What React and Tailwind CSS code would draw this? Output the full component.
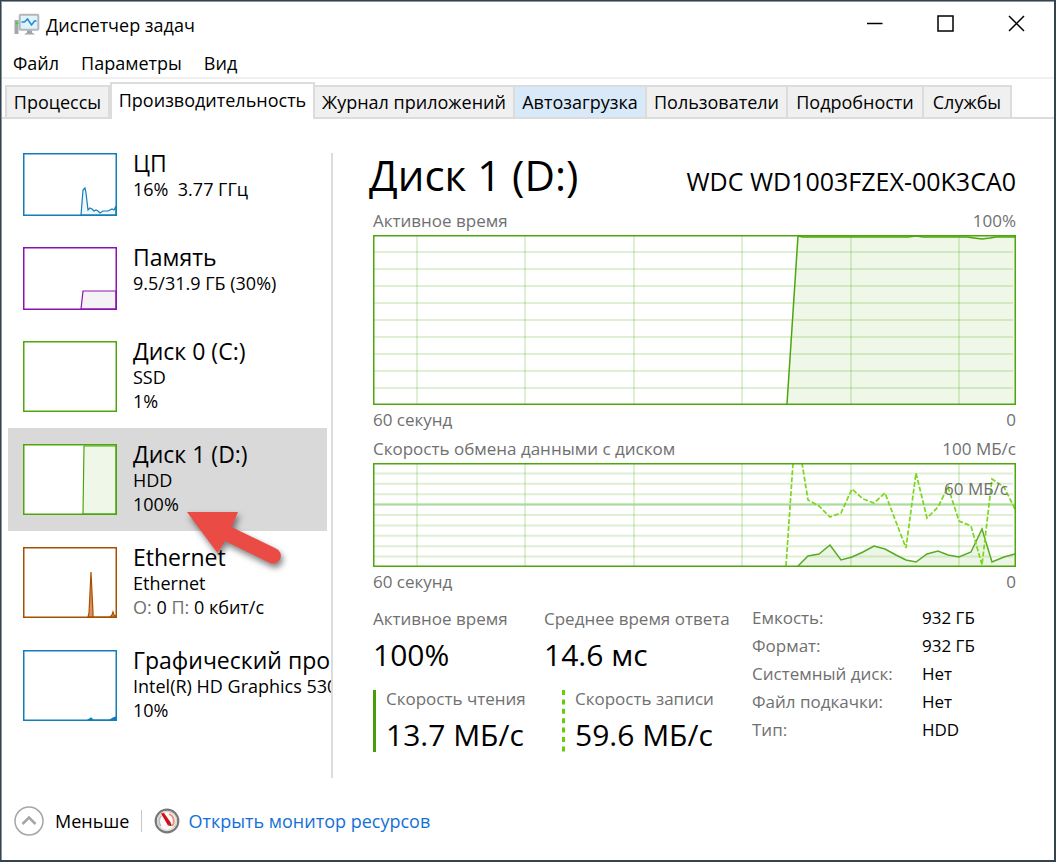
import React, { useState } from "react";

const CPU_BLUE = "#117dbb";
const MEMORY_PURPLE = "#8b12ae";
const DISK_GREEN = "#4da60c";
const NETWORK_BROWN = "#a74f01";

const tabs = [
  { label: "Процессы", width: "w-[105px]" },
  { label: "Производительность", width: "w-[205px]", active: true },
  { label: "Журнал приложений", width: "w-[200px]" },
  { label: "Автозагрузка", width: "w-[132px]", hovered: true },
  { label: "Пользователи", width: "w-[141px]" },
  { label: "Подробности", width: "w-[136px]" },
  { label: "Службы", width: "w-[88px]" },
];

const devices = [
  {
    title: "ЦП",
    lines: ["16%  3.77 ГГц"],
    color: CPU_BLUE,
    short: true,
    area: "58,62 59,50 60,37 62,35 63,40 65,57 67,55 69,56 71,58 73,57 75,58 77,60 80,58 85,58 89,56 91,57 93,53 93,62",
    fill: "#f1f6fa",
  },
  {
    title: "Память",
    lines: ["9.5/31.9 ГБ (30%)"],
    color: MEMORY_PURPLE,
    short: true,
    area: "58,62 60,44 93,44 93,62",
    fill: "#f4f2f4",
  },
  { title: "Диск 0 (C:)", lines: ["SSD", "1%"], color: DISK_GREEN },
  {
    title: "Диск 1 (D:)",
    lines: ["HDD", "100%"],
    color: DISK_GREEN,
    area: "60,70 61,2 93,2 93,70",
    fill: "#eff7e9",
    selected: true,
  },
  {
    title: "Ethernet",
    lines: ["Ethernet"],
    color: NETWORK_BROWN,
    network: true,
    area: "65,70 66,66 68,25 70,66 70,70 87,70 89,68 90,65 91,68 93,69 93,70",
    fill: "#e0905f",
  },
  {
    title: "Графический про",
    lines: ["Intel(R) HD Graphics 530", "10%"],
    color: CPU_BLUE,
    area: "65,70 68,68 70,70 87,70 90,68 93,67 93,70",
    fill: CPU_BLUE,
  },
];

const details = [
  ["Емкость:", "932 ГБ"],
  ["Формат:", "932 ГБ"],
  ["Системный диск:", "Нет"],
  ["Файл подкачки:", "Нет"],
  ["Тип:", "HDD"],
];

const WRITE_POINTS =
  "413,103 420,0 429,0 435,37 446,43 457,54 468,50 479,26 490,36 501,40 512,30 523,59 533,85 543,10 554,55 565,44 575,24 586,58 598,63 609,102 619,16 631,24 642,46";
const READ_POINTS =
  "425,103 435,93 446,91 457,82 468,97 479,94 490,89 501,83 512,86 523,92 533,97 543,99 554,91 565,88 575,92 586,94 598,89 609,66 619,99 631,94 642,91";

function AppIcon() {
  return (
    <svg width="26" height="24" viewBox="0 0 26 24" aria-hidden="true">
      <rect x="0.5" y="7" width="4" height="14" fill="#a5a8aa" />
      <rect x="1.5" y="9" width="3" height="2" fill="#35df21" />
      <rect x="5.7" y="1.7" width="18.6" height="15" rx="1" fill="#dff3fc" stroke="#b3b7ba" strokeWidth="2" />
      <path d="M7.5 9h3l3-3 4 6 3-4h2" fill="none" stroke="#2889cd" strokeWidth="1.5" />
      <path d="M13 17.5h5v2l3 2H10l3-2z" fill="#9fa4a7" />
    </svg>
  );
}

function GaugeIcon() {
  return (
    <svg width="26" height="26" viewBox="0 0 26 26" aria-hidden="true">
      <circle cx="13" cy="13" r="11.3" fill="#fbfaf8" stroke="#777876" strokeWidth="2.2" />
      <circle cx="13" cy="13" r="9.4" fill="none" stroke="#d4d3cf" strokeWidth="1.4" />
      <path d="M7 18A7.7 7.7 0 0 1 7.5 7.5" fill="none" stroke="#b9b9b5" strokeWidth="1.5" />
      <path d="M15 6A7.5 7.5 0 0 1 18 18" fill="none" stroke="#e89473" strokeWidth="1.8" />
      <path d="M7 5.5 10 5l7 10-3 2.5z" fill="#d50b17" />
      <path d="M14 17.5l3-2.5.5 3z" fill="#8c1017" />
    </svg>
  );
}

function MiniChart({ device }) {
  const height = device.short ? 63 : 71;
  return (
    <svg width="94" height={height} viewBox={`0 0 94 ${height}`} className="shrink-0" aria-hidden="true">
      <rect x="0.75" y="0.75" width="92.5" height={height - 1.5} fill="#fff" />
      {device.area && <polygon points={device.area} fill={device.fill} stroke={device.color} strokeWidth="1.2" />}
      <rect x="0.75" y="0.75" width="92.5" height={height - 1.5} fill="none" stroke={device.color} strokeWidth="1.5" />
    </svg>
  );
}

function Arrow() {
  return (
    <svg
      className="pointer-events-none absolute left-[171px] top-[76px] z-10 drop-shadow-[2px_4px_3px_rgba(0,0,0,0.5)]"
      width="112"
      height="72"
      viewBox="0 0 112 72"
      aria-hidden="true"
    >
      <path d="M8 8H59L52.5 23 97 44.500A7.300 7.300 0 0 1 91 59L46 37 38.500 49z" fill="#ea4b45" />
    </svg>
  );
}

function Device({ device, onSelect, selected }) {
  return (
    <button
      type="button"
      onClick={onSelect}
      aria-pressed={selected}
      className={`relative flex w-full shrink-0 items-start gap-4 pl-[15px] text-left ${device.short ? "h-[94px]" : "h-[103px]"} ${selected ? "bg-[#d9d9d9]" : ""}`}
    >
      <span className="pt-4">
        <MiniChart device={device} />
      </span>
      <span className="flex flex-col whitespace-pre pt-3">
        <span className="text-[23px] leading-7">{device.title}</span>
        {device.lines.map((line) => (
          <span key={line} className="text-[18px] leading-6">{line}</span>
        ))}
        {device.network && (
          <span className="text-[18px] leading-6">
            <span className="text-[#707070]">О:</span> 0 <span className="text-[#707070]">П:</span> 0 кбит/с
          </span>
        )}
      </span>
      {device.selected && <Arrow />}
    </button>
  );
}

function GridLines({ height }) {
  return (
    <g stroke="#4da60c" strokeOpacity="0.18" strokeWidth="2">
      {[44, 152, 261, 369, 478, 586].map((x) => (
        <line key={x} x1={x} x2={x} y1="0" y2={height} />
      ))}
      {[1, 2, 3, 4, 5, 6, 7, 8, 9].map((n) => (
        <line key={n} x1="0" x2="640" y1={(n * height) / 10} y2={(n * height) / 10} />
      ))}
    </g>
  );
}

function ActiveChart() {
  return (
    <svg className="block h-[170px] w-full" viewBox="0 0 643 170" preserveAspectRatio="none" role="img" aria-label="Активное время">
      <GridLines height={170} />
      <polygon points="414,169 425,1 642,1 642,169" fill="#4da60c" fillOpacity="0.09" />
      <polyline points="414,169 425,1 430,2 535,2 543,1 550,2 594,2 601,3 609,4 617,3 623,2 642,2" fill="none" stroke="#4da60c" strokeWidth="1.5" />
      <rect x="0.75" y="0.75" width="641.5" height="168.5" fill="none" stroke="#4da60c" strokeWidth="1.5" />
    </svg>
  );
}

function TransferChart() {
  return (
    <div className="relative">
      <svg className="block h-[104px] w-full" viewBox="0 0 643 104" preserveAspectRatio="none" role="img" aria-label="Скорость обмена данными с диском">
        <GridLines height={104} />
        <line x1="0" x2="642" y1="41.500" y2="41.500" stroke="#a9dd99" strokeWidth="2" />
        <polygon points={`${READ_POINTS} 642,103`} fill="#4da60c" fillOpacity="0.1" />
        <polyline points={READ_POINTS} fill="none" stroke="#57ab25" strokeWidth="1.5" />
        <polyline points={WRITE_POINTS} fill="none" stroke="#7bd61c" strokeWidth="1.7" strokeDasharray="5 2" />
        <rect x="0.75" y="0.75" width="641.5" height="102.500" fill="none" stroke="#4da60c" strokeWidth="1.5" />
      </svg>
      <span className="absolute right-2 top-[14px] text-[17px] leading-6 text-[#707070]">60 МБ/с</span>
    </div>
  );
}

function Caption({ left, right, className }) {
  return (
    <div className={`flex items-center justify-between text-[17px] text-[#707070] ${className}`}>
      <span>{left}</span>
      <span>{right}</span>
    </div>
  );
}

function Stat({ label, value }) {
  return (
    <div className="whitespace-nowrap">
      <div className="text-[17px] leading-[30px] text-[#707070]">{label}</div>
      <div className="text-[30px] leading-[42px]">{value}</div>
    </div>
  );
}

export default function App() {
  const [selected, setSelected] = useState(3);
  return (
    <div className="flex min-h-screen flex-col bg-[#34444f] pb-[2px] pl-px pr-[2px] pt-px font-['Open_Sans','Noto_Sans',sans-serif] text-black">
      <main className="flex grow flex-col border-l border-t border-[#8d969d] bg-white">
        <header className="flex h-[46px] items-center justify-between pl-3">
          <h1 className="flex items-center gap-1.5 text-[18px]">
            <AppIcon />
            Диспетчер задач
          </h1>
          <div className="flex pb-1 pr-[2px]">
            <button type="button" aria-label="Свернуть" className="flex h-10 w-[70px] items-center justify-center">
              <svg width="16" height="16" viewBox="0 0 16 16"><path d="M0 8.500H15.500" stroke="#000" strokeWidth="1.5" /></svg>
            </button>
            <button type="button" aria-label="Развернуть" className="flex h-10 w-[70px] items-center justify-center">
              <svg width="17" height="17" viewBox="0 0 17 17"><rect x="1" y="1" width="15" height="15" fill="none" stroke="#000" strokeWidth="1.5" /></svg>
            </button>
            <button type="button" aria-label="Закрыть" className="flex h-10 w-[72px] items-center justify-center">
              <svg width="17" height="17" viewBox="0 0 17 17"><path d="M1 1L16 16M16 1L1 16" stroke="#000" strokeWidth="1.5" /></svg>
            </button>
          </div>
        </header>

        <nav className="flex h-[31px] items-center gap-[22px] border-b-2 border-[#f0f0f0] pl-[11px] pt-[2px] text-[18px]">
          <button type="button">Файл</button>
          <button type="button">Параметры</button>
          <button type="button">Вид</button>
        </nav>

        <div role="tablist" className="flex h-10 items-end border-b-2 border-[#dcdcdc] pl-[3px] text-[18px]">
          {tabs.map((tab) => (
            <button
              key={tab.label}
              type="button"
              role="tab"
              aria-selected={!!tab.active}
              className={`flex justify-center whitespace-nowrap border-[#dcdcdc] ${tab.width} ${
                tab.active
                  ? "-mb-[2px] h-[37px] border-x-2 border-t-2 bg-white pt-[3px]"
                  : `h-8 items-center border-r-2 border-t-2 first:border-l-2 ${tab.hovered ? "bg-[#d8eaf9]" : "bg-[#f0f0f0]"}`
              }`}
            >
              {tab.label}
            </button>
          ))}
        </div>

        <div className="flex grow">
          <aside className="flex w-[329px] shrink-0 flex-col pb-1 pt-[34px]">
            <div className="-mt-4 flex grow flex-col overflow-hidden pl-[6px] pr-1">
              {devices.map((device, index) => (
                <Device key={device.title} device={device} selected={index === selected} onSelect={() => setSelected(index)} />
              ))}
            </div>
          </aside>
          <div className="mb-1 mt-[34px] w-[2px] shrink-0 bg-[#dcdcdc]" />

          <section className="flex min-w-0 grow flex-col pl-10 pr-[38px] pt-6">
            <div className="flex h-16 items-center justify-between whitespace-nowrap">
              <h2 className="-ml-1 text-[42px] leading-[60px]">Диск 1 (D:)</h2>
              <div className="pt-[14px] text-[25px]">WDC WD1003FZEX-00K3CA0</div>
            </div>
            <Caption left="Активное время" right="100%" className="h-7" />
            <ActiveChart />
            <Caption left="60 секунд" right="0" className="h-[29px]" />
            <Caption left="Скорость обмена данными с диском" right="100 МБ/с" className="h-[29px]" />
            <TransferChart />
            <Caption left="60 секунд" right="0" className="h-[29px]" />

            <div className="flex pt-2">
              <div className="flex w-[379px] shrink-0 flex-col gap-2">
                <div className="flex">
                  <div className="w-[171px]">
                    <Stat label="Активное время" value="100%" />
                  </div>
                  <Stat label="Среднее время ответа" value="14.6 мс" />
                </div>
                <div className="flex">
                  <div className="flex w-[189px] gap-[10px]">
                    <div className="my-[6px] w-[3px] bg-[#459f0b]" />
                    <Stat label="Скорость чтения" value="13.7 МБ/с" />
                  </div>
                  <div className="flex gap-[10px]">
                    <svg className="my-[6px]" width="3" height="62" aria-hidden="true">
                      <path d="M1.500 0V62" stroke="#69cc08" strokeWidth="3" strokeDasharray="5 4.400" />
                    </svg>
                    <Stat label="Скорость записи" value="59.6 МБ/с" />
                  </div>
                </div>
              </div>
              <dl className="grid grow grid-cols-[170px_1fr] content-start whitespace-nowrap text-[17px] leading-7">
                {details.map(([label, value]) => (
                  <React.Fragment key={label}>
                    <dt className="text-[#707070]">{label}</dt>
                    <dd>{value}</dd>
                  </React.Fragment>
                ))}
              </dl>
            </div>
          </section>
        </div>

        <footer className="flex h-[78px] items-center gap-3 pl-3 text-[18px]">
          <button type="button" className="flex items-center gap-[11px]">
            <svg width="30" height="30" viewBox="0 0 30 30" aria-hidden="true">
              <circle cx="15" cy="15" r="14" fill="none" stroke="#a5a5a5" strokeWidth="1.5" />
              <path d="M8.500 18L15 11.500 21.500 18" fill="none" stroke="#a5a5a5" strokeWidth="2.500" />
            </svg>
            Меньше
          </button>
          <div className="h-[22px] w-px bg-[#c8c8c8]" />
          <a href="#resources" className="flex items-center gap-2 text-[#1370d6]">
            <GaugeIcon />
            Открыть монитор ресурсов
          </a>
        </footer>
      </main>
    </div>
  );
}
